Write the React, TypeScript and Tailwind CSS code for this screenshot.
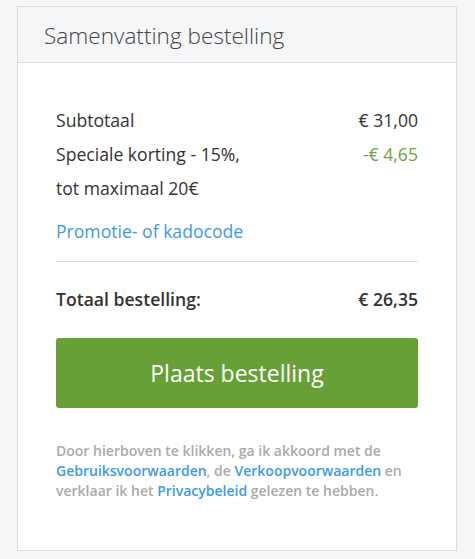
export default function App() {
  return (
    <div className="min-h-[559px] w-[475px] bg-[#f5f6f8] pt-[6px] pl-[17px]" style={{ fontFamily: '"Open Sans", sans-serif' }}>
      <div className="w-[440px] h-[545px] border border-[#dcdde0] bg-white flex flex-col">
        <div className="h-[56px] bg-[#f5f6f8] border-b border-[#dcdde0] flex items-center pl-[26px] pt-[2px]">
          <h2 className="text-[22.6px] font-light text-[#444]">Samenvatting bestelling</h2>
        </div>
        <div className="px-[38px] pt-[40px] flex flex-col">
          <div className="flex justify-between text-[17.6px] text-[#333] leading-[34px]">
            <span>Subtotaal</span>
            <span>€ 31,00</span>
          </div>
          <div className="flex justify-between text-[17.6px] text-[#333] leading-[34px]">
            <span>
              Speciale korting - 15%,
              <br />
              tot maximaal 20€
            </span>
            <span className="text-[#6aa541]">-€ 4,65</span>
          </div>
          <a className="mt-[9px] text-[17.6px] leading-[34px] text-[#3c9be6]">Promotie- of kadocode</a>
          <div className="mt-[13px] border-t border-[#dcdde0]" />
          <div className="mt-[20px] flex justify-between text-[17.6px] font-semibold text-[#333] leading-[34px]">
            <span>Totaal bestelling:</span>
            <span>€ 26,35</span>
          </div>
          <button className="mt-[22px] h-[70px] w-full rounded-[3px] bg-[#67a037] text-white text-[23px]">
            Plaats bestelling
          </button>
          <p className="mt-[33px] text-[14px] font-semibold leading-[20px] text-[#aaaaaa]">
            Door hierboven te klikken, ga ik akkoord met de{" "}
            <a className="text-[#3c9be6]">Gebruiksvoorwaarden</a>, de{" "}
            <a className="text-[#3c9be6]">Verkoopvoorwaarden</a> en verklaar ik het{" "}
            <a className="text-[#3c9be6]">Privacybeleid</a> gelezen te hebben.
          </p>
        </div>
      </div>
    </div>
  );
}
